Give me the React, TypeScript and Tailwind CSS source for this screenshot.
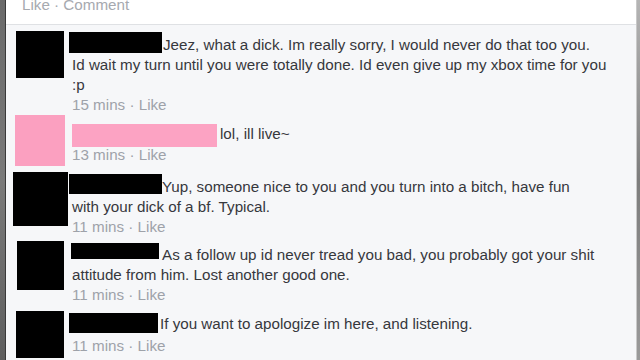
const font = { fontFamily: '"Liberation Sans", Arial, sans-serif' };

type Entry = {
  rowClass: string;
  avatarClass: string;
  contentClass: string;
  barClass: string;
  firstClass: string;
  first: string;
  rest: string[];
  time: string;
  timeClass?: string;
};

const comments: Entry[] = [
  {
    rowClass: "mt-[6px]",
    avatarClass: "ml-[10px] w-[48px] h-[47px] bg-black",
    contentClass: "ml-[8px] mt-[1px]",
    barClass: "-ml-[3px] mr-[1px] w-[93px] h-[21px] bg-black",
    firstClass: "pt-[3px]",
    first: "Jeez, what a dick. Im really sorry, I would never do that too you.",
    rest: ["Id wait my turn until you were totally done. Id even give up my xbox time for you", ":p"],
    time: "15 mins",
  },
  {
    rowClass: "mt-0",
    avatarClass: "ml-[9px] w-[50px] h-[51px] bg-[#fba0c0]",
    contentClass: "ml-[7px] mt-[9px]",
    barClass: "mr-[3px] w-[145px] h-[23px] -mb-[2px] bg-[#fca3c3]",
    firstClass: "pt-0",
    first: "lol, ill live~",
    rest: [],
    time: "13 mins",
  },
  {
    rowClass: "mt-[6px]",
    avatarClass: "ml-[7px] w-[55px] h-[54px] bg-black",
    contentClass: "ml-[4px] mt-[2px]",
    barClass: "-ml-[3px] w-[93px] h-[20px] bg-black",
    firstClass: "pt-[3px]",
    first: "Yup, someone nice to you and you turn into a bitch, have fun",
    rest: ["with your dick of a bf. Typical."],
    time: "11 mins",
  },
  {
    rowClass: "mt-[4px]",
    avatarClass: "ml-[11px] w-[47px] h-[49px] bg-black",
    contentClass: "ml-[8px] mt-[2px]",
    barClass: "-ml-[1px] mr-[3px] w-[88px] h-[16px] bg-black",
    firstClass: "pt-[2px]",
    first: "As a follow up id never tread you bad, you probably got your shit",
    rest: ["attitude from him. Lost another good one."],
    time: "11 mins",
  },
  {
    rowClass: "mt-[6px]",
    avatarClass: "ml-[10px] w-[48px] h-[47px] bg-black",
    contentClass: "ml-[8px] mt-[2px]",
    barClass: "-ml-[3px] mr-[2px] w-[89px] h-[20px] bg-black",
    firstClass: "pt-[1px]",
    first: "If you want to apologize im here, and listening.",
    rest: [],
    time: "11 mins",
    timeClass: "mt-[2px]",
  },
];

function Comment({ c }: { c: Entry }) {
  return (
    <div className={`flex items-start ${c.rowClass}`}>
      <div className={`shrink-0 ${c.avatarClass}`} />
      <div className={`flex flex-col ${c.contentClass}`}>
        <div className="flex items-start">
          <div className={`shrink-0 ${c.barClass}`} />
          <span className={`whitespace-nowrap text-[15.2px] leading-[20px] text-[#36383d] ${c.firstClass}`}>
            {c.first}
          </span>
        </div>
        {c.rest.map((line) => (
          <div key={line} className="whitespace-nowrap text-[15.2px] leading-[20px] text-[#36383d]">
            {line}
          </div>
        ))}
        <div className={`whitespace-nowrap text-[15.2px] leading-[20px] text-[#9ea2a9] ${c.timeClass ?? ""}`}>
          {c.time} · Like
        </div>
      </div>
    </div>
  );
}

export default function App() {
  return (
    <div className="flex h-[360px] w-[640px] overflow-hidden bg-[#8a8a8a]" style={font}>
      <div className="w-[5px] shrink-0 bg-[linear-gradient(180deg,#6a6a6a,#7a7a7a,#5e5e5e)]" />
      <div className="flex min-w-0 flex-1 flex-col border-x border-l-[#3a3a3a] border-r-[#c9c9c9] bg-[#f6f7f9]">
        <div className="h-[25px] shrink-0 overflow-hidden border-b border-[#dfe1e4] bg-white pl-[16px]">
          <div className="-mt-[5px] text-[15.2px] leading-[20px] text-[#a6a9af]">Like · Comment</div>
        </div>
        {comments.map((c, i) => (
          <Comment key={i} c={c} />
        ))}
      </div>
      <div className="w-[3px] shrink-0 bg-[linear-gradient(180deg,#b5b5b5,#7d7d7d,#9a9a9a)]" />
    </div>
  );
}
